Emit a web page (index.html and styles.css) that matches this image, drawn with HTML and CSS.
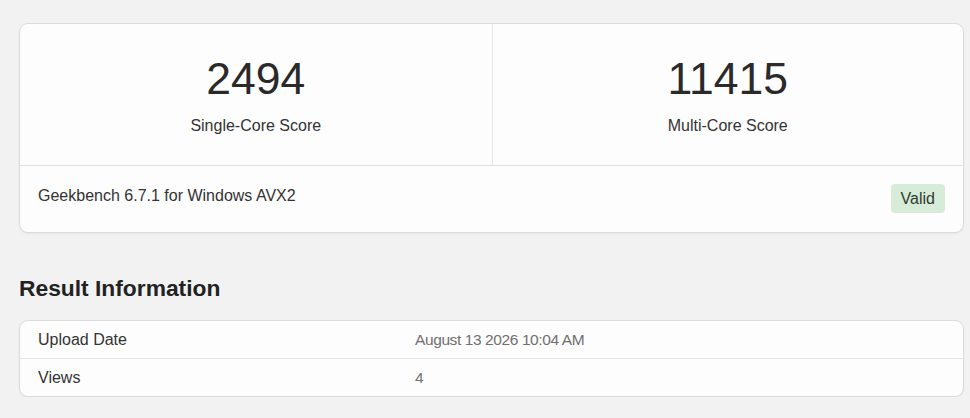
FILE: index.html
```html
<!DOCTYPE html>
<html>
<head>
<meta charset="utf-8">
<link rel="stylesheet" href="styles.css">
</head>
<body>
<div class="page">
  <div class="card">
    <div class="scores">
      <div class="score">
        <div class="score-value">2494</div>
        <div class="score-label">Single-Core Score</div>
      </div>
      <div class="score">
        <div class="score-value">11415</div>
        <div class="score-label">Multi-Core Score</div>
      </div>
    </div>
    <div class="card-footer">
      <div class="version">Geekbench 6.7.1 for Windows AVX2</div>
      <div class="badge">Valid</div>
    </div>
  </div>

  <h2 class="section-title">Result Information</h2>
  <div class="table">
    <div class="row">
      <div class="key">Upload Date</div>
      <div class="val">August 13 2026 10:04 AM</div>
    </div>
    <div class="row">
      <div class="key">Views</div>
      <div class="val">4</div>
    </div>
  </div>
</div>
</body>
</html>
```

FILE: styles.css
```css
html, body {
  margin: 0;
  padding: 0;
  background: #f2f2f2;
  font-family: "Liberation Sans", Arial, sans-serif;
  color: #333;
}
.page {
  padding: 23px 6px 0 19px;
}
.card {
  background: #fdfdfd;
  border: 1px solid #dcdcdc;
  border-radius: 9px;
  box-shadow: 0 1px 2px rgba(0,0,0,0.05);
}
.scores {
  display: grid;
  grid-template-columns: 1fr 1fr;
  height: 141px;
  border-bottom: 1px solid #e0e0e0;
}
.score {
  display: flex;
  flex-direction: column;
  align-items: center;
  padding-top: 30px;
}
.score + .score {
  border-left: 1px solid #e6e6e6;
}
.score-value {
  font-size: 44.5px;
  line-height: 50px;
  color: #2a2a2a;
}
.score-label {
  font-size: 16px;
  line-height: 20px;
  margin-top: 12px;
  color: #333;
}
.card-footer {
  display: flex;
  justify-content: space-between;
  align-items: flex-start;
  height: 66px;
  padding: 0 18px 0 18px;
}
.version {
  font-size: 16px;
  line-height: 20px;
  margin-top: 20px;
  color: #333;
}
.badge {
  margin-top: 18px;
  background: #d6ecd9;
  color: #2f3a30;
  font-size: 16px;
  line-height: 29px;
  padding: 0 10px;
  border-radius: 4px;
}
.section-title {
  margin: 41px 0 0 0;
  font-size: 22.8px;
  line-height: 28px;
  font-weight: bold;
  color: #222;
}
.table {
  margin-top: 18px;
  background: #fdfdfd;
  border: 1px solid #dcdcdc;
  border-radius: 9px;
  box-shadow: 0 1px 2px rgba(0,0,0,0.05);
}
.row {
  display: grid;
  grid-template-columns: 377px 1fr;
  height: 37px;
  align-items: center;
  padding: 0 18px;
}
.row + .row {
  border-top: 1px solid #e6e6e6;
}
.key {
  font-size: 16px;
  color: #333;
}
.val {
  font-size: 15.5px;
  letter-spacing: -0.4px;
  color: #707070;
}
```
